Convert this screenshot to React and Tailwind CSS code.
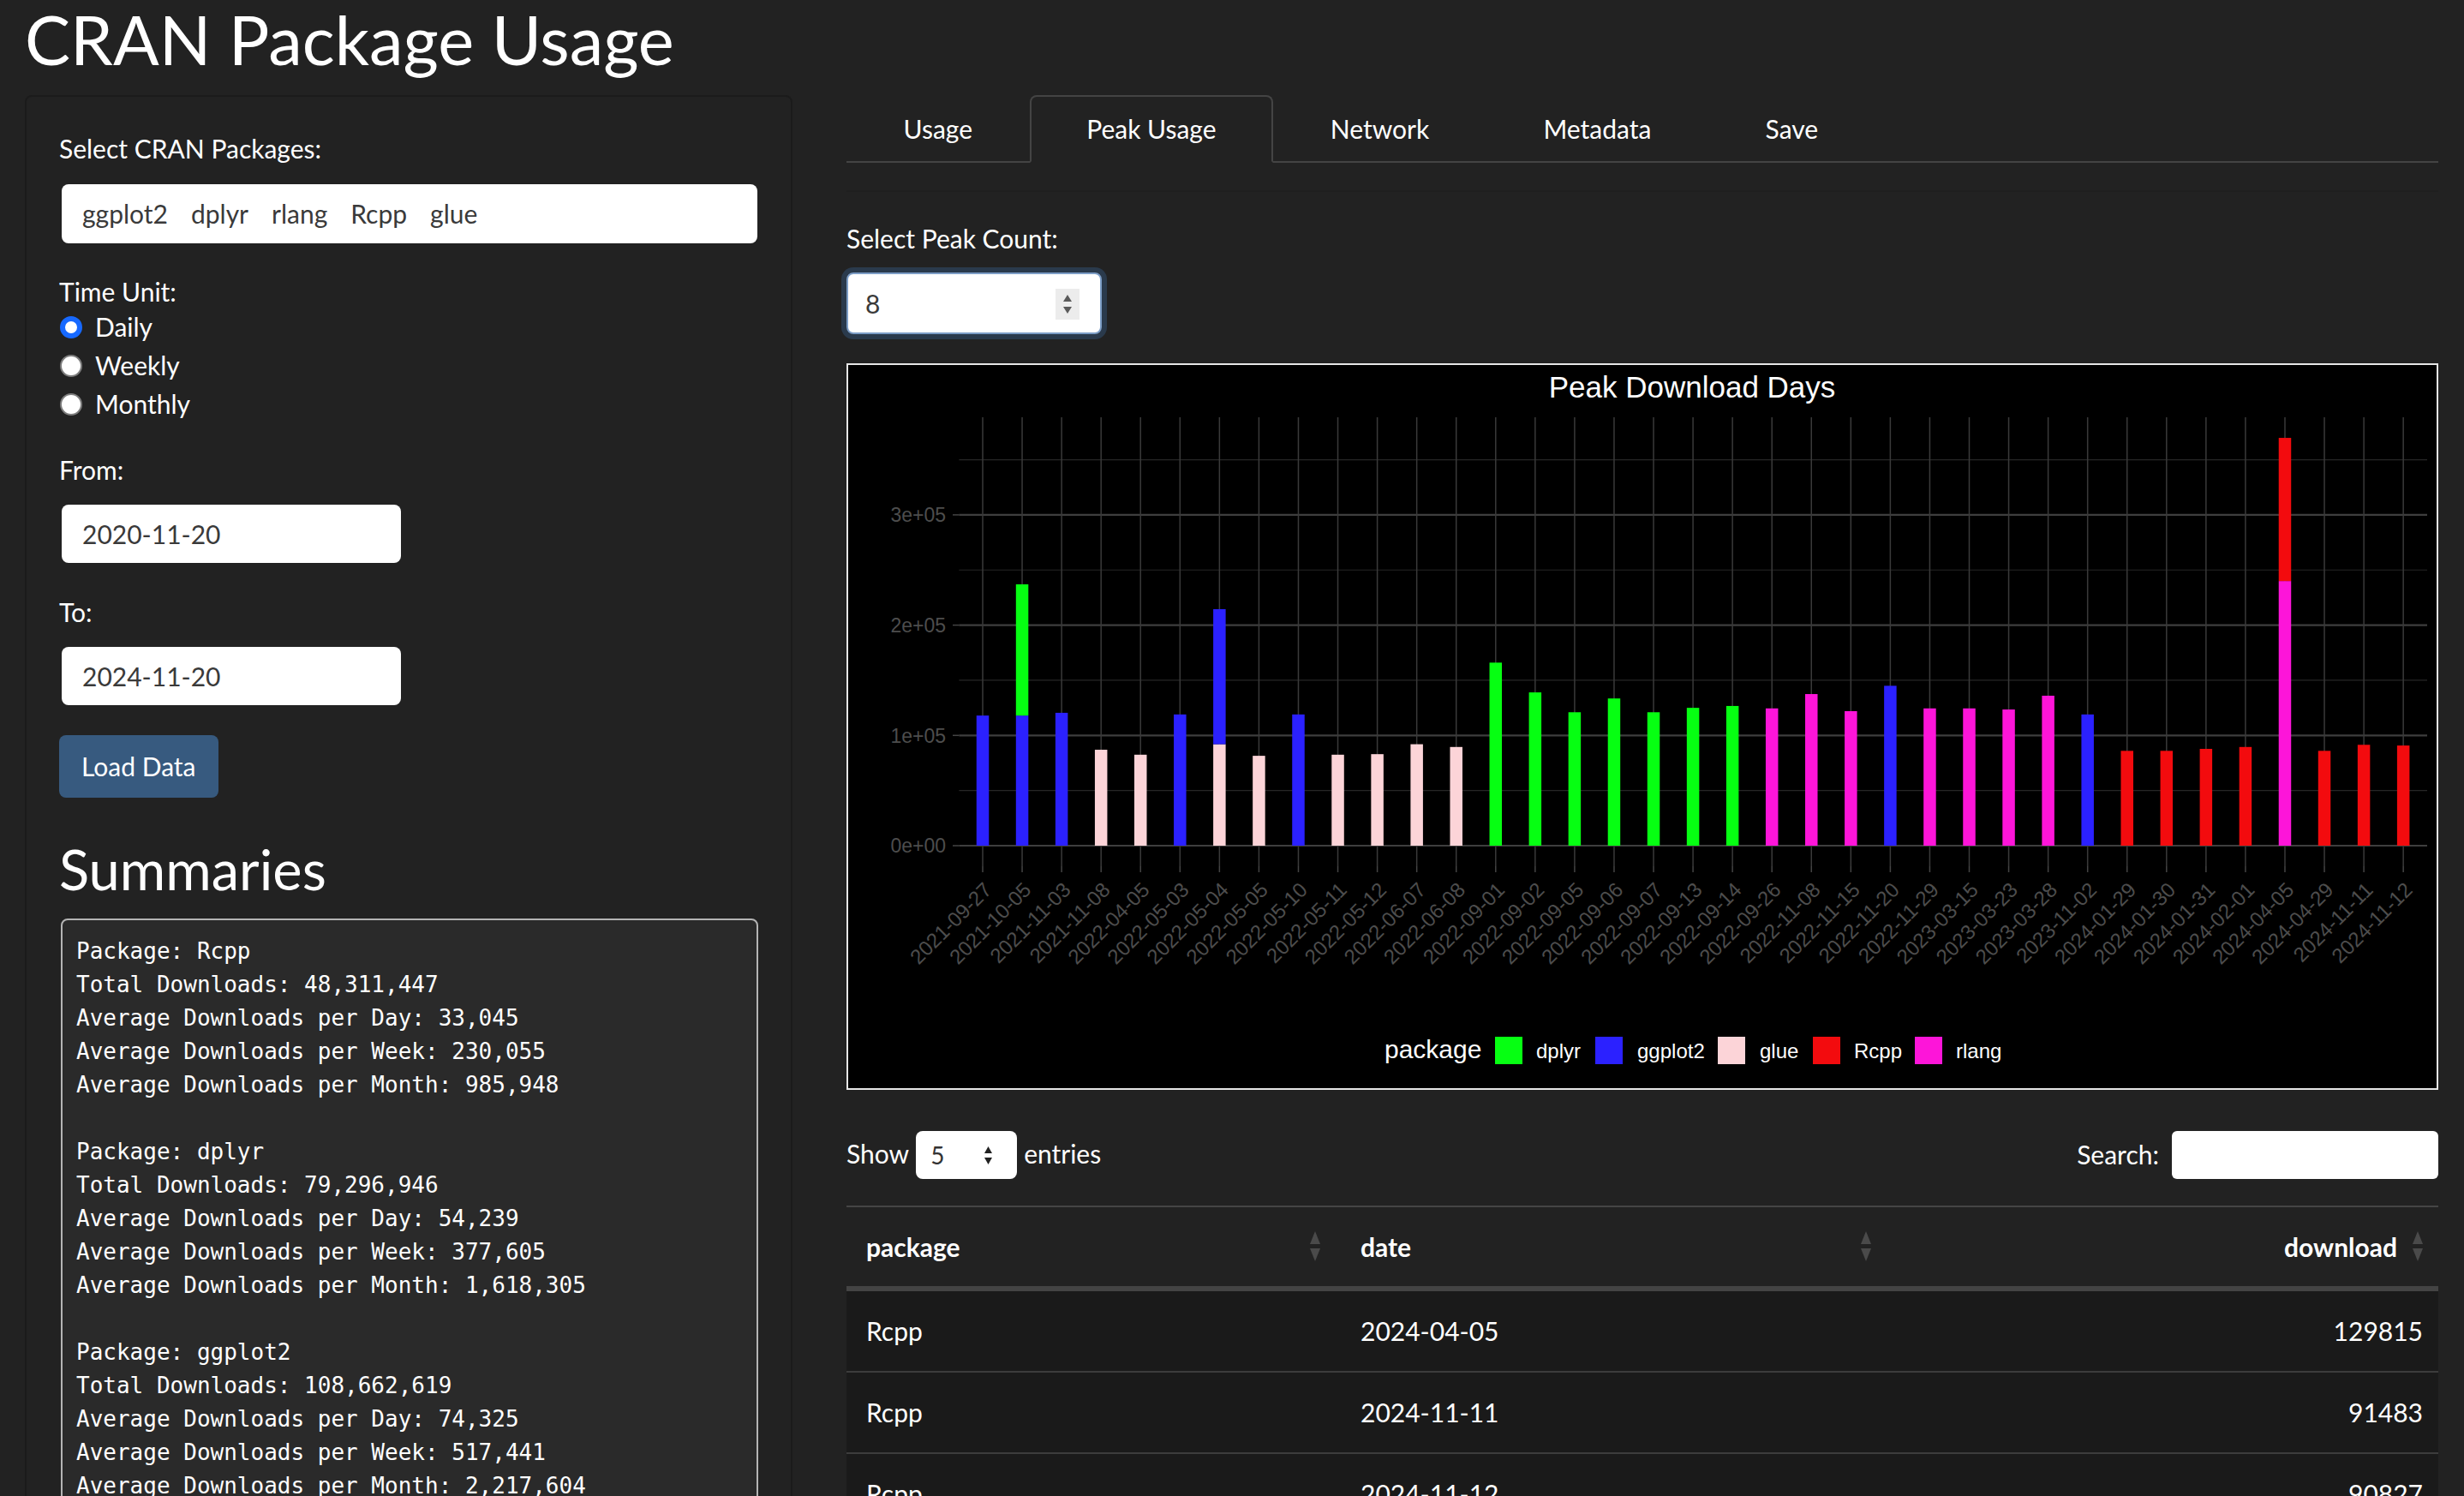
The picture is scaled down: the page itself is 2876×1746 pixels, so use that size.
import React from 'react'

const COLORS = {
  dplyr: '#06ff12',
  ggplot2: '#2b21ff',
  glue: '#fcd4d8',
  Rcpp: '#f30b0e',
  rlang: '#fd15d9',
}

// bottom segment first, like ggplot stacks them
const PEAKS = [
  ['2021-09-27', [['ggplot2', 118000]]],
  ['2021-10-05', [['ggplot2', 118000], ['dplyr', 119000]]],
  ['2021-11-03', [['ggplot2', 120500]]],
  ['2021-11-08', [['glue', 87000]]],
  ['2022-04-05', [['glue', 82500]]],
  ['2022-05-03', [['ggplot2', 119000]]],
  ['2022-05-04', [['glue', 92000], ['ggplot2', 122500]]],
  ['2022-05-05', [['glue', 81500]]],
  ['2022-05-10', [['ggplot2', 119000]]],
  ['2022-05-11', [['glue', 82500]]],
  ['2022-05-12', [['glue', 83000]]],
  ['2022-06-07', [['glue', 92000]]],
  ['2022-06-08', [['glue', 89500]]],
  ['2022-09-01', [['dplyr', 166000]]],
  ['2022-09-02', [['dplyr', 139000]]],
  ['2022-09-05', [['dplyr', 121000]]],
  ['2022-09-06', [['dplyr', 133500]]],
  ['2022-09-07', [['dplyr', 121000]]],
  ['2022-09-13', [['dplyr', 125000]]],
  ['2022-09-14', [['dplyr', 126700]]],
  ['2022-09-26', [['rlang', 124500]]],
  ['2022-11-08', [['rlang', 137500]]],
  ['2022-11-15', [['rlang', 122000]]],
  ['2022-11-20', [['ggplot2', 145000]]],
  ['2022-11-29', [['rlang', 124500]]],
  ['2023-03-15', [['rlang', 124500]]],
  ['2023-03-23', [['rlang', 123500]]],
  ['2023-03-28', [['rlang', 136000]]],
  ['2023-11-02', [['ggplot2', 119000]]],
  ['2024-01-29', [['Rcpp', 86000]]],
  ['2024-01-30', [['Rcpp', 86000]]],
  ['2024-01-31', [['Rcpp', 87800]]],
  ['2024-02-01', [['Rcpp', 89500]]],
  ['2024-04-05', [['rlang', 240000], ['Rcpp', 129815]]],
  ['2024-04-29', [['Rcpp', 86000]]],
  ['2024-11-11', [['Rcpp', 91483]]],
  ['2024-11-12', [['Rcpp', 90827]]],
]

const SUMMARY = `Package: Rcpp
Total Downloads: 48,311,447
Average Downloads per Day: 33,045
Average Downloads per Week: 230,055
Average Downloads per Month: 985,948

Package: dplyr
Total Downloads: 79,296,946
Average Downloads per Day: 54,239
Average Downloads per Week: 377,605
Average Downloads per Month: 1,618,305

Package: ggplot2
Total Downloads: 108,662,619
Average Downloads per Day: 74,325
Average Downloads per Week: 517,441
Average Downloads per Month: 2,217,604`

const ROWS = [
  ['Rcpp', '2024-04-05', '129815'],
  ['Rcpp', '2024-11-11', '91483'],
  ['Rcpp', '2024-11-12', '90827'],
]

const TABS = ['Usage', 'Peak Usage', 'Network', 'Metadata', 'Save']

const LEGEND = [
  ['dplyr', 755, 803],
  ['ggplot2', 872, 921],
  ['glue', 1015, 1064],
  ['Rcpp', 1126, 1174],
  ['rlang', 1245, 1293],
]

function Radio({ label, checked }) {
  return (
    <div className="flex h-[45px] items-center">
      {checked ? (
        <span className="ml-[1px] h-[26px] w-[26px] rounded-full border-[6px] border-[#1769ff] bg-white" />
      ) : (
        <span className="ml-[1px] h-[26px] w-[26px] rounded-full border-2 border-[#7d7d7d] bg-white" />
      )}
      <span className="ml-[15px] text-[30px] leading-[45px]">{label}</span>
    </div>
  )
}

function UpDown({ w = 10, h = 8, gap = 4, fill = '#555' }) {
  return (
    <svg width={w} height={h * 2 + gap} viewBox={`0 0 ${w} ${h * 2 + gap}`}>
      <polygon points={`0,${h} ${w / 2},0 ${w},${h}`} fill={fill} />
      <polygon points={`0,${h + gap} ${w},${h + gap} ${w / 2},${h * 2 + gap}`} fill={fill} />
    </svg>
  )
}

function Sidebar() {
  return (
    <div className="w-[896px] shrink-0 rounded-[8px] border-2 border-[#1b1b1b] bg-[#222222] p-[38px] pr-[39px]">
      <div className="mb-[19px] text-[30px] leading-[45px]">Select CRAN Packages:</div>
      <div className="ml-[3px] flex h-[69px] w-[812px] items-center gap-[27px] rounded-[8px] bg-white pl-[24px] text-[30px] text-[#3a3a3a]">
        <span>ggplot2</span>
        <span>dplyr</span>
        <span>rlang</span>
        <span>Rcpp</span>
        <span>glue</span>
      </div>

      <div className="mt-[34px] text-[30px] leading-[45px]">Time Unit:</div>
      <div className="-mt-[4px]">
        <Radio label="Daily" checked />
        <Radio label="Weekly" />
        <Radio label="Monthly" />
      </div>

      <div className="mt-[32px] mb-[18px] text-[30px] leading-[45px]">From:</div>
      <div className="ml-[3px] flex h-[68px] w-[396px] items-center rounded-[8px] bg-white pl-[24px] text-[30px] text-[#3a3a3a]">
        2020-11-20
      </div>

      <div className="mt-[35px] mb-[18px] text-[30px] leading-[45px]">To:</div>
      <div className="ml-[3px] flex h-[68px] w-[396px] items-center rounded-[8px] bg-white pl-[24px] text-[30px] text-[#3a3a3a]">
        2024-11-20
      </div>

      <button
        type="button"
        className="mt-[35px] flex h-[73px] w-[186px] items-center rounded-[8px] bg-[#375a7f] pl-[26px] text-[30px] text-white"
      >
        Load Data
      </button>

      <h3 className="mt-[44px] text-[65px] font-normal leading-[79px]">Summaries</h3>
      <pre className="mt-[18px] ml-[2px] w-[814px] rounded-[8px] border-2 border-[#b4b4b4] bg-[#2a2a2a] p-[17px] pl-[16px] font-['DejaVu_Sans_Mono',monospace] text-[26px] leading-[39px] text-white">
        {SUMMARY}
      </pre>
    </div>
  )
}

function PeakPlot() {
  const cx = (i) => 157 + i * 46.06
  const py = (v) => 561 - (v * 128.7) / 100000
  const font = 'Liberation Sans, Arial, sans-serif'
  return (
    <svg width="1854" height="844" className="block" fontFamily={font}>
      <text x="985" y="38" fill="#fff" fontSize="35" textAnchor="middle">
        Peak Download Days
      </text>

      {[50000, 150000, 250000, 350000].map((v) => (
        <line key={v} x1="129.4" x2="1843" y1={py(v)} y2={py(v)} stroke="#262626" strokeWidth="1.2" />
      ))}
      {[0, 100000, 200000, 300000].map((v) => (
        <line key={v} x1="129.4" x2="1843" y1={py(v)} y2={py(v)} stroke="#3e3e3e" strokeWidth="2.2" />
      ))}
      {PEAKS.map((p, i) => (
        <line key={p[0]} x1={cx(i)} x2={cx(i)} y1="61" y2="585" stroke="#3a3a3a" strokeWidth="1.5" />
      ))}

      {PEAKS.map((p, i) => {
        let base = 0
        return p[1].map(([pkg, v]) => {
          const y0 = py(base)
          base += v
          const y1 = py(base)
          return <rect key={p[0] + pkg} x={cx(i) - 7.25} y={y1} width="14.5" height={y0 - y1} fill={COLORS[pkg]} />
        })
      })}

      {/* y axis */}
      {[0, 100000, 200000, 300000].map((v, k) => (
        <g key={v}>
          <line x1="122" x2="129.4" y1={py(v)} y2={py(v)} stroke="#444" strokeWidth="1.5" />
          <text x="114" y={py(v) + 8.2} fill="#4d4d4d" fontSize="23" textAnchor="end">
            {k + 'e+0' + (k === 0 ? '0' : '5')}
          </text>
        </g>
      ))}

      {/* x axis */}
      {PEAKS.map((p, i) => (
        <g key={p[0]}>
          <line x1={cx(i)} x2={cx(i)} y1="585" y2="592" stroke="#444" strokeWidth="1.5" />
          <text
            x={cx(i) + 12}
            y="614"
            fill="#4d4d4d"
            fontSize="24"
            textAnchor="end"
            transform={`rotate(-45 ${cx(i) + 12} 614)`}
          >
            {p[0]}
          </text>
        </g>
      ))}

      {/* legend */}
      <text x="626" y="809" fill="#fff" fontSize="30">
        package
      </text>
      {LEGEND.map(([name, kx, lx]) => (
        <g key={name}>
          <rect x={kx} y="784" width="32" height="32" fill={COLORS[name]} />
          <text x={lx} y="809" fill="#fff" fontSize="24">
            {name}
          </text>
        </g>
      ))}
    </svg>
  )
}

function Main() {
  return (
    <div className="w-[1858px] shrink-0">
      <div className="flex border-b-2 border-[#444]">
        {TABS.map((t) => (
          <div
            key={t}
            className={
              t === 'Peak Usage'
                ? '-mb-[2px] flex h-[79px] items-center rounded-t-[8px] border-2 border-[#444] border-b-[#222] bg-[#222] px-[64.6px] text-[30px] leading-[45px]'
                : '-mb-[2px] flex h-[79px] items-center border-2 border-transparent px-[64.6px] text-[30px] leading-[45px]'
            }
          >
            {t}
          </div>
        ))}
      </div>
      <div className="mt-[32px] h-[2px] bg-[#1f1f1f]" />

      <div className="mt-[32px] text-[30px] leading-[45px]">Select Peak Count:</div>
      <div className="mt-[17px] w-[298px] rounded-[8px] shadow-[0_0_0_6px_#2a3a4c]">
        <div className="relative flex h-[72px] items-center rounded-[8px] border-2 border-[#7c9dc6] bg-white pl-[20px] text-[30px] text-[#3a3a3a]">
          8
          <div className="absolute right-[24px] top-[17px] flex h-[36px] w-[28px] items-center justify-center bg-[#ececec]">
            <UpDown w={10} h={8} gap={6} fill="#5a5a5a" />
          </div>
        </div>
      </div>

      <div className="mt-[34px] h-[848px] w-full border-2 border-[#e6e6e6] bg-black">
        <PeakPlot />
      </div>

      <div className="mt-[48px] flex h-[56px] items-center justify-between text-[30px] leading-[40px]">
        <div className="flex items-center">
          <span className="-mt-[4px]">Show</span>
          <div className="relative mx-[8px] flex h-[56px] w-[118px] items-center rounded-[8px] bg-white pl-[17px] text-[28px] text-[#333]">
            5
            <div className="absolute right-[29px] top-[18px]">
              <UpDown w={9} h={8} gap={5} fill="#222" />
            </div>
          </div>
          <span className="-mt-[4px]">entries</span>
        </div>
        <div className="flex items-center">
          <span className="-mt-[2px]">Search:</span>
          <div className="ml-[15px] h-[56px] w-[311px] rounded-[6px] bg-white" />
        </div>
      </div>

      <div className="mt-[31px] border-t-2 border-[#454545]">
        <div className="grid grid-cols-[578px_639px_641px] border-b-[6px] border-[#444] text-[30px] font-bold">
          <div className="relative flex h-[92px] items-center pl-[23px]">
            package
            <div className="absolute right-[25px] top-[28px]">
              <UpDown w={12} h={15} gap={5} fill="#4a4a4a" />
            </div>
          </div>
          <div className="relative flex h-[92px] items-center pl-[22px]">
            date
            <div className="absolute right-[21px] top-[28px]">
              <UpDown w={12} h={15} gap={5} fill="#4a4a4a" />
            </div>
          </div>
          <div className="relative flex h-[92px] items-center justify-end pr-[48px]">
            download
            <div className="absolute right-[18px] top-[28px]">
              <UpDown w={12} h={15} gap={5} fill="#4a4a4a" />
            </div>
          </div>
        </div>
        {ROWS.map((r) => (
          <div
            key={r[1]}
            className="grid h-[95px] grid-cols-[578px_639px_641px] border-b-2 border-[#3c3c3c] bg-[#1a1a1a] text-[30px]"
          >
            <div className="flex items-center pl-[23px]">{r[0]}</div>
            <div className="flex items-center pl-[22px]">{r[1]}</div>
            <div className="flex items-center justify-end pr-[18px]">{r[2]}</div>
          </div>
        ))}
      </div>
    </div>
  )
}

export default function App() {
  return (
    <div className="h-[1746px] w-full overflow-hidden bg-[#222222] font-['Lato',sans-serif] text-white">
      <div className="px-[29px]">
        <h2 className="mt-[2px] text-[79.5px] font-normal leading-[88px]">CRAN Package Usage</h2>
        <div className="mt-[21px] flex items-start gap-[63px]">
          <Sidebar />
          <Main />
        </div>
      </div>
    </div>
  )
}
